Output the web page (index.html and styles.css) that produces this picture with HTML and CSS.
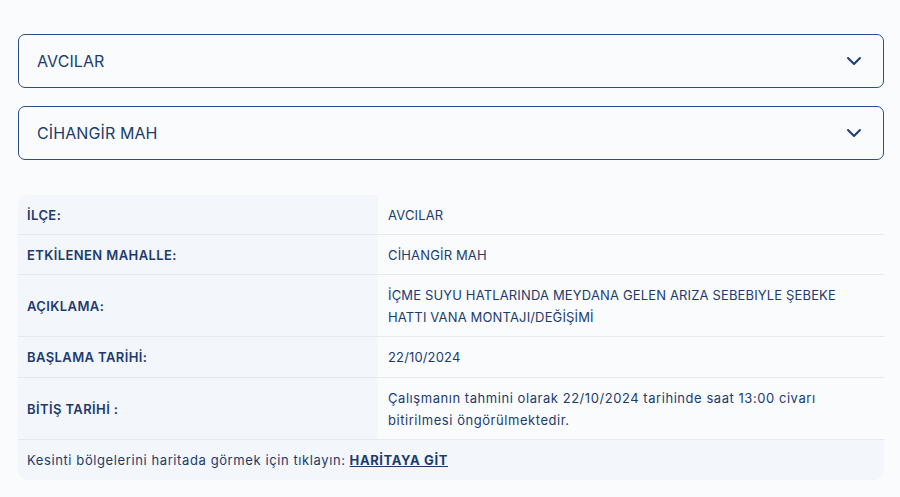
FILE: index.html
```html
<!DOCTYPE html>
<html lang="tr">
<head>
  <meta charset="UTF-8" />
  <meta name="viewport" content="width=device-width, initial-scale=1.0"/>
  <title>Kesinti Bilgisi</title>
  <link rel="stylesheet" href="styles.css">
</head>
<body>

  <!-- FILTERS -->
  <div class="select-box">
    <span>AVCILAR</span>
    <svg width="16" height="10" viewBox="0 0 16 10"><path d="M2 2l6 6 6-6" fill="none" stroke="#1d3b6e" stroke-width="2" stroke-linecap="round" stroke-linejoin="round"/></svg>
  </div>
  <div class="select-box">
    <span>CİHANGİR MAH</span>
    <svg width="16" height="10" viewBox="0 0 16 10"><path d="M2 2l6 6 6-6" fill="none" stroke="#1d3b6e" stroke-width="2" stroke-linecap="round" stroke-linejoin="round"/></svg>
  </div>

  <!-- DETAIL TABLE -->
  <div class="detail">
    <div class="row">
      <div class="label">İLÇE:</div>
      <div class="value">AVCILAR</div>
    </div>
    <div class="row">
      <div class="label">ETKİLENEN MAHALLE:</div>
      <div class="value">CİHANGİR MAH</div>
    </div>
    <div class="row tall">
      <div class="label">AÇIKLAMA:</div>
      <div class="value">İÇME SUYU HATLARINDA MEYDANA GELEN ARIZA SEBEBIYLE ŞEBEKE<br>HATTI VANA MONTAJI/DEĞİŞİMİ</div>
    </div>
    <div class="row mid">
      <div class="label">BAŞLAMA TARİHİ:</div>
      <div class="value">22/10/2024</div>
    </div>
    <div class="row tall">
      <div class="label">BİTİŞ TARİHİ :</div>
      <div class="value sentence">Çalışmanın tahmini olarak 22/10/2024 tarihinde saat 13:00 civarı<br>bitirilmesi öngörülmektedir.</div>
    </div>
    <div class="foot">
      Kesinti bölgelerini haritada görmek için tıklayın: <a href="#">HARİTAYA GİT</a>
    </div>
  </div>

</body>
</html>
```

FILE: styles.css
```css
* {
  box-sizing: border-box;
  margin: 0;
  padding: 0;
}

body {
  font-family: Inter, "Noto Sans", sans-serif;
  background-color: #f9fbfd;
  color: #1d3b6e;
  padding: 34px 16px 0 18px;
}

.select-box {
  display: flex;
  justify-content: space-between;
  align-items: center;
  height: 54px;
  padding: 0 21px 0 18px;
  border: 1px solid #2a4f8c;
  border-radius: 7px;
  margin-bottom: 18px;
  font-size: 16px;
  letter-spacing: 0.1px;
}

.detail {
  margin-top: 35px;
  border-radius: 10px;
  overflow: hidden;
  background-color: #f3f6fa;
  font-size: 13px;
}

.row {
  display: flex;
  height: 40px;
  border-bottom: 1px solid #e6e9ee;
}

.row.mid {
  height: 41px;
}

.row.tall {
  height: 62px;
}

.label {
  width: 360px;
  display: flex;
  align-items: center;
  padding-left: 9px;
  font-weight: 600;
  letter-spacing: 0.4px;
}

.value {
  flex: 1;
  display: flex;
  align-items: center;
  padding-left: 10px;
  background-color: #f9fbfd;
  line-height: 22px;
  letter-spacing: 0.15px;
}

.value.sentence {
  letter-spacing: 0.55px;
}

.foot {
  height: 40px;
  display: flex;
  align-items: center;
  padding-left: 9px;
  letter-spacing: 0.6px;
}

.foot a {
  color: #1d3b6e;
  font-weight: 700;
  margin-left: 4px;
  letter-spacing: 0.6px;
}
```
